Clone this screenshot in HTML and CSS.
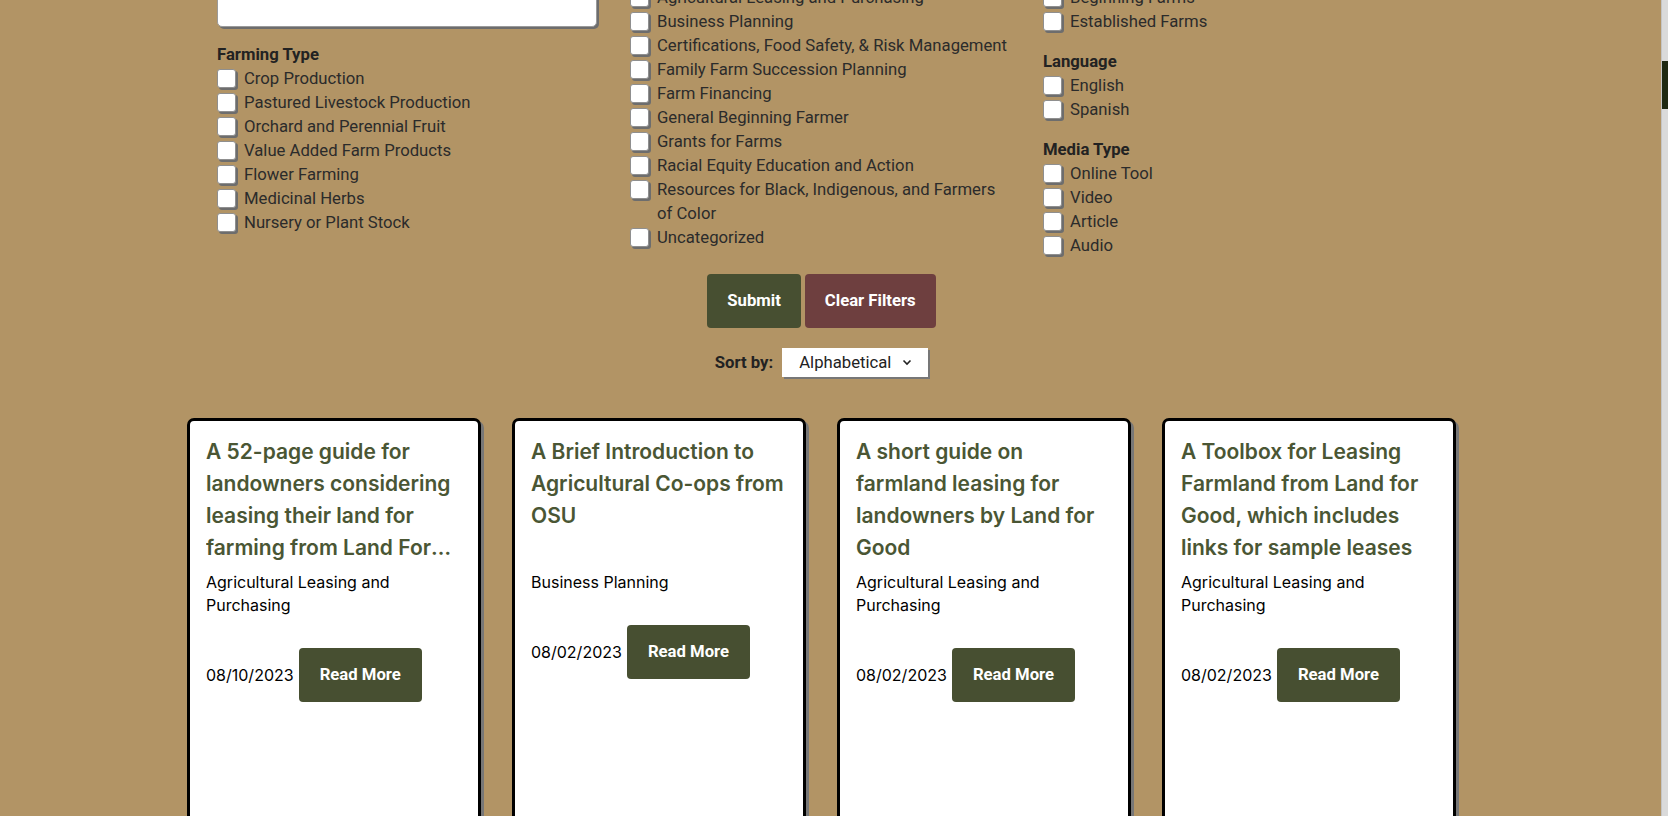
FILE: index.html
```html
<!DOCTYPE html>
<html lang="en">
<head>
  <meta charset="UTF-8" />
  <meta name="viewport" content="width=device-width, initial-scale=1.0"/>
  <title>Farmer Resources</title>
  <link rel="stylesheet" href="styles.css">
</head>
<body>
  <div class="page">
    <form class="filters" onsubmit="return false">

      <!-- Column 1: search + farming type -->
      <div class="filter-col">
        <div class="group">
          <h3>Search</h3>
          <input type="text" class="search-box" />
        </div>
        <div class="group">
          <h3>Farming Type</h3>
          <label class="option"><input type="checkbox"><span>Crop Production</span></label>
          <label class="option"><input type="checkbox"><span>Pastured Livestock Production</span></label>
          <label class="option"><input type="checkbox"><span>Orchard and Perennial Fruit</span></label>
          <label class="option"><input type="checkbox"><span>Value Added Farm Products</span></label>
          <label class="option"><input type="checkbox"><span>Flower Farming</span></label>
          <label class="option"><input type="checkbox"><span>Medicinal Herbs</span></label>
          <label class="option"><input type="checkbox"><span>Nursery or Plant Stock</span></label>
        </div>
      </div>

      <!-- Column 2: topics -->
      <div class="filter-col topics">
        <div class="group">
          <h3>Topic</h3>
          <label class="option"><input type="checkbox"><span>Agricultural Leasing and Purchasing</span></label>
          <label class="option"><input type="checkbox"><span>Business Planning</span></label>
          <label class="option"><input type="checkbox"><span>Certifications, Food Safety, &amp; Risk Management</span></label>
          <label class="option"><input type="checkbox"><span>Family Farm Succession Planning</span></label>
          <label class="option"><input type="checkbox"><span>Farm Financing</span></label>
          <label class="option"><input type="checkbox"><span>General Beginning Farmer</span></label>
          <label class="option"><input type="checkbox"><span>Grants for Farms</span></label>
          <label class="option"><input type="checkbox"><span>Racial Equity Education and Action</span></label>
          <label class="option"><input type="checkbox"><span>Resources for Black, Indigenous, and Farmers of Color</span></label>
          <label class="option"><input type="checkbox"><span>Uncategorized</span></label>
        </div>
      </div>

      <!-- Column 3: stage, language, media -->
      <div class="filter-col">
        <div class="group">
          <h3>Farm Stage</h3>
          <label class="option"><input type="checkbox"><span>Beginning Farms</span></label>
          <label class="option"><input type="checkbox"><span>Established Farms</span></label>
        </div>
        <div class="group">
          <h3>Language</h3>
          <label class="option"><input type="checkbox"><span>English</span></label>
          <label class="option"><input type="checkbox"><span>Spanish</span></label>
        </div>
        <div class="group">
          <h3>Media Type</h3>
          <label class="option"><input type="checkbox"><span>Online Tool</span></label>
          <label class="option"><input type="checkbox"><span>Video</span></label>
          <label class="option"><input type="checkbox"><span>Article</span></label>
          <label class="option"><input type="checkbox"><span>Audio</span></label>
        </div>
      </div>
    </form>

    <div class="actions">
      <button class="btn btn-submit">Submit</button>
      <button class="btn btn-clear">Clear Filters</button>
    </div>

    <div class="sort-row">
      <span class="sort-label">Sort by:</span>
      <button class="sort-select">
        <span>Alphabetical</span>
        <svg width="10" height="7" viewBox="0 0 10 7"><path d="M1.5 1.5 L5 5 L8.5 1.5" fill="none" stroke="#222" stroke-width="1.6"/></svg>
      </button>
    </div>

    <div class="cards">
      <div class="card">
        <h2 class="card-title">A 52-page guide for landowners considering leasing their land for farming from Land For Good</h2>
        <p class="card-cat">Agricultural Leasing and Purchasing</p>
        <div class="card-foot">
          <span class="card-date">08/10/2023</span>
          <a class="btn btn-read" href="#">Read More</a>
        </div>
      </div>
      <div class="card">
        <h2 class="card-title">A Brief Introduction to Agricultural Co-ops from OSU</h2>
        <p class="card-cat">Business Planning</p>
        <div class="card-foot">
          <span class="card-date">08/02/2023</span>
          <a class="btn btn-read" href="#">Read More</a>
        </div>
      </div>
      <div class="card">
        <h2 class="card-title">A short guide on farmland leasing for landowners by Land for Good</h2>
        <p class="card-cat">Agricultural Leasing and Purchasing</p>
        <div class="card-foot">
          <span class="card-date">08/02/2023</span>
          <a class="btn btn-read" href="#">Read More</a>
        </div>
      </div>
      <div class="card">
        <h2 class="card-title">A Toolbox for Leasing Farmland from Land for Good, which includes links for sample leases</h2>
        <p class="card-cat">Agricultural Leasing and Purchasing</p>
        <div class="card-foot">
          <span class="card-date">08/02/2023</span>
          <a class="btn btn-read" href="#">Read More</a>
        </div>
      </div>
    </div>
  </div>

  <!-- slim custom scrollbar -->
  <div class="scroll-track"><div class="scroll-thumb"></div></div>
</body>
</html>
```

FILE: styles.css
```css
body {
  margin: 0;
  background-color: #b29465;
  font-family: Roboto, "Liberation Sans", sans-serif;
  color: #2a2a2a;
  overflow: hidden;
}
.page {
  width: 1269px;
  margin-left: 187px;
  margin-top: -38px;
}

/* filter form */
.filters {
  display: grid;
  grid-template-columns: repeat(3, 413px);
  padding-left: 30px;
}
.group {
  margin-bottom: 16px;
}
.group h3 {
  margin: 0;
  font-size: 16.7px;
  line-height: 24px;
  font-weight: 700;
  color: #222;
}
.search-box {
  display: block;
  box-sizing: border-box;
  width: 380px;
  height: 41px;
  border: 1px solid #9a9a9a;
  border-radius: 5px;
  background: #fff;
  box-shadow: 2px 2px 0 #6d6d6d;
}
.option {
  display: flex;
  align-items: flex-start;
  font-size: 16.7px;
  line-height: 24px;
  color: #2b2b2b;
}
.topics .option span {
  max-width: 356px;
}
.option input {
  appearance: none;
  -webkit-appearance: none;
  flex: none;
  width: 19px;
  height: 19px;
  margin: 2px 8px 0 0;
  background: #fff;
  border: 1px solid #8f8f8f;
  border-radius: 3px;
  box-shadow: 2px 2px 0 #6d6d6d;
}

/* buttons */
.actions {
  display: flex;
  justify-content: center;
  gap: 4px;
}
.btn {
  display: inline-block;
  padding: 15px 20px;
  font-family: Roboto, "Liberation Sans", sans-serif;
  font-size: 16.7px;
  line-height: 24px;
  font-weight: 700;
  color: #fff;
  border: none;
  border-radius: 4px;
  text-decoration: none;
  cursor: pointer;
}
.btn-submit, .btn-read {
  background-color: #474f31;
}
.btn-clear {
  background-color: #6e3f3f;
}
.btn-read {
  padding: 15px 21px;
}

/* sort */
.sort-row {
  display: flex;
  justify-content: center;
  align-items: center;
  gap: 9px;
  margin-top: 20px;
}
.sort-label {
  font-size: 16.7px;
  font-weight: 700;
  color: #222;
}
.sort-select {
  display: flex;
  align-items: center;
  justify-content: space-between;
  box-sizing: border-box;
  width: 146px;
  height: 29px;
  padding: 0 16px 0 17px;
  background: #fff;
  border: none;
  box-shadow: 2px 2px 0 #777;
  font-family: Roboto, "Liberation Sans", sans-serif;
  font-size: 16.7px;
  color: #222;
}

/* resource cards */
.cards {
  display: grid;
  grid-template-columns: repeat(4, 294px);
  gap: 31px;
  margin-top: 41px;
}
.card {
  box-sizing: border-box;
  min-height: 460px;
  padding: 15px 16px;
  background: #fff;
  border: 3px solid #000;
  border-radius: 7px;
  box-shadow: 3px 3px 0 #777;
}
.card-title {
  margin: 0;
  height: 128px;
  font-family: Inter, "Open Sans", sans-serif;
  font-size: 21px;
  line-height: 32px;
  font-weight: 600;
  color: #4a5634;
  display: -webkit-box;
  -webkit-box-orient: vertical;
  -webkit-line-clamp: 4;
  overflow: hidden;
}
.card-cat {
  margin: 7px 0 0;
  font-family: Inter, Roboto, sans-serif;
  font-size: 16px;
  line-height: 23px;
  color: #000;
}
.card-foot {
  display: flex;
  align-items: center;
  gap: 5px;
  margin-top: 31px;
}
.card-date {
  font-family: Inter, Roboto, sans-serif;
  font-size: 16px;
  color: #000;
}

.scroll-track {
  position: fixed;
  top: 0;
  right: 0;
  bottom: 0;
  width: 6px;
  background: #dadada;
  border-left: 1px solid #c4c4c4;
}
.scroll-thumb {
  margin-top: 61px;
  height: 48px;
  background: #1e2912;
}
```
